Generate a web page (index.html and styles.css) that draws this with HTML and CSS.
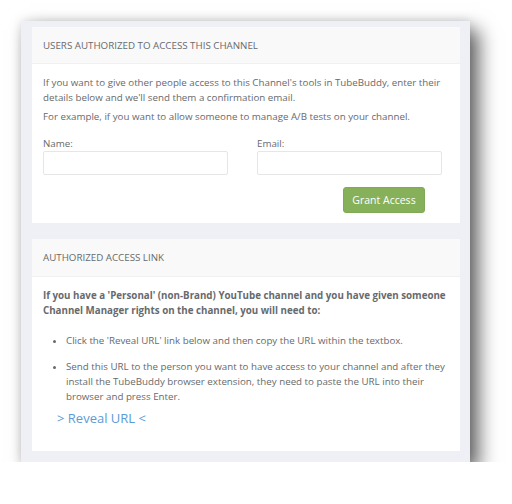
FILE: index.html
```html
<!DOCTYPE html>
<html>
<head>
<meta charset="utf-8">
<link rel="stylesheet" href="styles.css">
</head>
<body>
<div class="frame">
  <section class="panel">
    <div class="panel-head">Users authorized to access this channel</div>
    <div class="panel-body">
      <p>If you want to give other people access to this Channel's tools in TubeBuddy, enter their details below and we'll send them a confirmation email.</p>
      <p>For example, if you want to allow someone to manage A/B tests on your channel.</p>
      <div class="form-grid">
        <label class="field"><span>Name:</span><input type="text"></label>
        <label class="field"><span>Email:</span><input type="text"></label>
      </div>
      <div class="actions"><button class="btn">Grant Access</button></div>
    </div>
  </section>
  <section class="panel panel-grow">
    <div class="panel-head head2">Authorized Access Link</div>
    <div class="panel-body body2">
      <p class="strong">If you have a 'Personal' (non-Brand) YouTube channel and you have given someone Channel Manager rights on the channel, you will need to:</p>
      <ul class="steps">
        <li>Click the 'Reveal URL' link below and then copy the URL within the textbox.</li>
        <li>Send this URL to the person you want to have access to your channel and after they install the TubeBuddy browser extension, they need to paste the URL into their browser and press Enter.</li>
      </ul>
      <a class="reveal" href="#">&gt; Reveal URL &lt;</a>
    </div>
  </section>
</div>
</body>
</html>
```
FILE: styles.css
```css
html, body {
  margin: 0;
  padding: 0;
  background: #ffffff;
}
body {
  font-family: "Open Sans", "Noto Sans", sans-serif;
  color: #676a6c;
  font-size: 9.75px;
  line-height: 15px;
}
.frame {
  margin: 21px 0 0 21px;
  width: 428px;
  height: 424px;
  padding: 6px 10px 11px 11px;
  background: #eef0f5;
  display: flex;
  flex-direction: column;
  gap: 16px;
  box-shadow: 9px 9px 18px rgba(0,0,0,0.6), 0 0 10px rgba(0,0,0,0.12);
}
.panel {
  background: #ffffff;
}
.panel-grow { flex: 1; }
.panel-head {
  height: 36px;
  display: flex;
  align-items: center;
  padding: 0 11px;
  background: #f9f9f9;
  border-bottom: 1px solid #f1f1f1;
  text-transform: uppercase;
  font-size: 9.75px;
  color: #676a6c;
}
.head2 { height: 37px; }
.panel-body {
  padding: 11px 11px 10px 11px;
}
.panel-body p {
  margin: 0 0 4px 0;
}
.form-grid {
  display: grid;
  grid-template-columns: 185px 185px;
  column-gap: 29px;
  margin-top: 13px;
}
.field {
  display: flex;
  flex-direction: column;
}
.field span { line-height: 14px; }
.field input {
  height: 24px;
  box-sizing: border-box;
  border: 1px solid #e5e6e7;
  border-radius: 2px;
  margin: 0;
  padding: 0 6px;
}
.actions {
  display: flex;
  justify-content: flex-end;
  width: 382px;
  margin-top: 12px;
}
.btn {
  font-family: "Open Sans", "Noto Sans", sans-serif;
  font-size: 10.5px;
  color: #ffffff;
  background: #87b05a;
  border: 1px solid #80a955;
  border-radius: 3px;
  width: 82px;
  height: 26px;
  padding: 0;
}
.body2 { padding-top: 11px; padding-bottom: 0; }
.strong { font-weight: 700; }
.steps {
  margin: 15px 0 0 0;
  padding-left: 23px;
}
.steps li { margin-bottom: 11px; }
.steps li:last-child { margin-bottom: 0; }
.reveal {
  display: inline-block;
  margin: 4px 0 0 14px;
  font-size: 13px;
  line-height: 20px;
  color: #5b9bd5;
  text-decoration: none;
}
```
